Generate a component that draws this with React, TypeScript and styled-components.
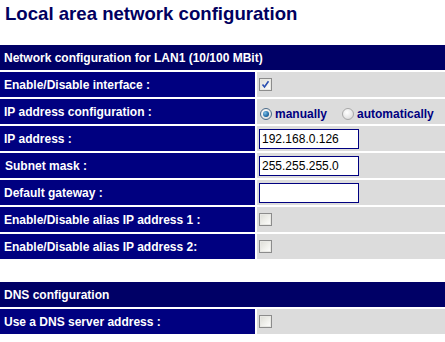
import styled, { createGlobalStyle } from "styled-components"

const GlobalStyle = createGlobalStyle`
  body {
    margin: 0;
    background: #ffffff;
    font-family: "Liberation Sans", Arial, sans-serif;
  }
`

const Page = styled.div`
  width: 445px;
`

const Title = styled.h1`
  margin: 0;
  padding: 3px 0 0 5px;
  height: 45px;
  box-sizing: border-box;
  font-size: 18.6px;
  font-weight: bold;
  color: #000060;
`

const ConfigTable = styled.div`
  display: grid;
  grid-template-columns: 255px 1fr;
  gap: 2px;
  margin: 0 0 23px 0;
`

const SectionHeader = styled.div`
  grid-column: 1 / 3;
  height: 25px;
  background: #000066;
  color: #ffffff;
  font-size: 12px;
  font-weight: bold;
  display: flex;
  align-items: center;
  padding-left: 4px;
`

const Label = styled.div<{ $indent?: number }>`
  height: 25px;
  background: #000080;
  color: #ffffff;
  font-size: 12px;
  font-weight: bold;
  display: flex;
  align-items: center;
  padding-left: ${(p) => p.$indent ?? 4}px;
`

const Value = styled.div`
  height: 25px;
  background: #dcdcdc;
  display: flex;
  align-items: center;
  padding-left: 2px;
  font-size: 12px;
`

const Check = styled.span`
  position: relative;
  width: 13px;
  height: 13px;
  box-sizing: border-box;
  border: 1px solid #8c8c8c;
  background: linear-gradient(135deg, #dcdcd6 0%, #f2f2ee 60%, #ffffff 100%);
  box-shadow: inset 0 0 0 1px #e8e8e4;
`

const Tick = styled.svg`
  position: absolute;
  left: 1px;
  top: 1px;
`

const RadioGroup = styled.div`
  display: flex;
  align-items: center;
  padding-top: 4px;
`

const Radio = styled.span<{ $on?: boolean }>`
  position: relative;
  width: 12px;
  height: 12px;
  border-radius: 50%;
  box-sizing: border-box;
  border: 1px solid ${(p) => (p.$on ? "#4a6b8a" : "#a8a8a8")};
  background: radial-gradient(circle at 40% 35%, #ffffff 0%, #e6e6e6 60%, #cfcfcf 100%);
  margin-left: 1px;

  &::after {
    content: "";
    display: ${(p) => (p.$on ? "block" : "none")};
    position: absolute;
    left: 2px;
    top: 2px;
    width: 6px;
    height: 6px;
    border-radius: 50%;
    background: radial-gradient(circle at 35% 35%, #7ec0e8 0%, #1f6aa5 60%, #0b3a66 100%);
  }
`

const RadioText = styled.span<{ $gap: number }>`
  color: #000080;
  font-weight: bold;
  font-size: 12px;
  margin-left: 3px;
  margin-right: ${(p) => p.$gap}px;
`

const TextBox = styled.div`
  width: 100px;
  height: 20px;
  box-sizing: border-box;
  border: 1px solid #000080;
  background: #ffffff;
  color: #000000;
  font-size: 12px;
  display: flex;
  align-items: center;
  padding-left: 2px;
`

function CheckBox({ checked }: { checked?: boolean }) {
  return (
    <Check>
      {checked && (
        <Tick width="9" height="9" viewBox="0 0 9 9">
          <path d="M1.5 4.5 L3.5 7 L7.5 1.2" fill="none" stroke="#2a4fb0" strokeWidth="1.6" />
        </Tick>
      )}
    </Check>
  )
}

export default function App() {
  return (
    <Page>
      <GlobalStyle />
      <Title>Local area network configuration</Title>
      <ConfigTable>
        <SectionHeader>Network configuration for LAN1 (10/100 MBit)</SectionHeader>
        <Label>Enable/Disable interface :</Label>
        <Value><CheckBox checked /></Value>
        <Label>IP address configuration :</Label>
        <Value>
          <RadioGroup>
            <Radio $on />
            <RadioText $gap={14}>manually</RadioText>
            <Radio />
            <RadioText $gap={0}>automatically</RadioText>
          </RadioGroup>
        </Value>
        <Label>IP address :</Label>
        <Value><TextBox>192.168.0.126</TextBox></Value>
        <Label $indent={5}>Subnet mask :</Label>
        <Value><TextBox>255.255.255.0</TextBox></Value>
        <Label>Default gateway :</Label>
        <Value><TextBox /></Value>
        <Label>Enable/Disable alias IP address 1 :</Label>
        <Value><CheckBox /></Value>
        <Label>Enable/Disable alias IP address 2:</Label>
        <Value><CheckBox /></Value>
      </ConfigTable>
      <ConfigTable>
        <SectionHeader>DNS configuration</SectionHeader>
        <Label>Use a DNS server address :</Label>
        <Value><CheckBox /></Value>
      </ConfigTable>
    </Page>
  )
}
